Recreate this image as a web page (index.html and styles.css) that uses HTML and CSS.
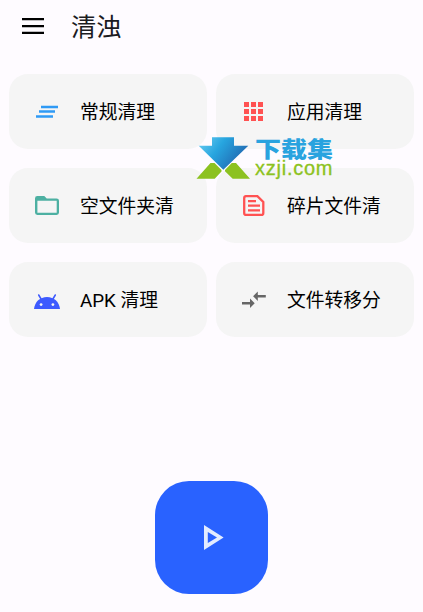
FILE: index.html
```html
<!DOCTYPE html>
<html lang="zh-CN">
<head>
<meta charset="utf-8">
<title>清浊</title>
<link rel="stylesheet" href="styles.css">
</head>
<body>
<header class="topbar">
  <svg class="menu" viewBox="0 0 22 16"><path d="M0 1.2h22M0 8.2h22M0 14.9h22" stroke="#000" stroke-width="2.3"/></svg>
  <h1 class="title">清浊</h1>
</header>
<main class="grid">
  <div class="card">
    <svg class="icon" viewBox="0 0 28 27"><path d="M8 9h17M6 13.5h16M3 18.5h17" stroke="#2f9af5" stroke-width="2.6"/></svg>
    <span>常规清理</span>
  </div>
  <div class="card">
    <svg class="icon" viewBox="0 0 28 27"><path d="M4 4h5v5H4zM11 4h5v5h-5zM18 4h5v5h-5zM4 11h5v5H4zM11 11h5v5h-5zM18 11h5v5h-5zM4 18h5v5H4zM11 18h5v5h-5zM18 18h5v5h-5z" fill="#ff5252"/></svg>
    <span>应用清理</span>
  </div>
  <div class="card">
    <svg class="icon" viewBox="0 0 28 27"><path fill-rule="evenodd" d="M4.4 4H11.3L13.7 6.4H23.6Q26 6.4 26 8.8V20.6Q26 23 23.6 23H4.4Q2 23 2 20.6V6.4Q2 4 4.4 4ZM4.4 8.8V20.7H23.7V8.8Z" fill="#4db0a2"/></svg>
    <span>空文件夹清</span>
  </div>
  <div class="card">
    <svg class="icon" viewBox="0 0 28 27"><path d="M5.2 4.1H17.4L23.3 10V20.9Q23.3 22.9 21.3 22.9H6.2Q4.2 22.9 4.2 20.9V6.1Q4.2 4.1 6.2 4.1ZM8 9.1h8M8 13.6h12M8 18.3h12" fill="none" stroke="#ff5252" stroke-width="2.3"/></svg>
    <span>碎片文件清</span>
  </div>
  <div class="card">
    <svg class="icon" viewBox="0 0 28 27"><path d="M5.7 9L8.4 13.5M22.3 9L19.6 13.5" stroke="#3d5afe" stroke-width="1.5" stroke-linecap="round"/><path d="M1 23C1.7 15.9 7 11 14 11S26.3 15.9 27 23Z" fill="#3d5afe"/><circle cx="8.1" cy="18.6" r="1.4" fill="#f5f5f5"/><circle cx="19.9" cy="18.6" r="1.4" fill="#f5f5f5"/></svg>
    <span>APK 清理</span>
  </div>
  <div class="card">
    <svg class="icon" viewBox="0 0 28 27"><path d="M2 16h8v-3.5l4.7 4.7L10 21.9v-3.5H2zM25.8 9h-8V5.5L13.1 10.2l4.7 4.7v-3.5h8z" fill="#666"/></svg>
    <span>文件转移分</span>
  </div>
</main>
<div class="run">
  <svg class="play" viewBox="0 0 20 25"><path d="M0 0L19.6 12.5L0 25ZM3.8 6.9V18.1L13 12.5Z" fill="#e3ecff" fill-rule="evenodd"/></svg>
</div>
<div class="watermark">
  <svg class="mark" viewBox="0 0 54 42">
    <defs><linearGradient id="blue" x1="0" y1="0" x2="1" y2="0.5"><stop offset="0" stop-color="#6fd0f2"/><stop offset="0.45" stop-color="#27a5df"/><stop offset="1" stop-color="#2167b0"/></linearGradient></defs>
    <path d="M16 0.3H38V8.7H52.3L27.3 32.7L2.7 8.7H16Z" fill="url(#blue)"/>
    <path d="M0.5 41.7L14.5 26H18.5L25.5 33V34.5L18.7 41.7ZM35.8 26H40L54 41.7H36.7L29 34.3V33Z" fill="#8cc220"/>
  </svg>
  <div class="brand"><span class="brand-cn">下载集</span><span class="brand-url">xzji.com</span></div>
</div>
</body>
</html>
```
FILE: styles.css
```css
* { box-sizing: border-box; }
body {
  margin: 0;
  height: 612px;
  overflow: hidden;
  position: relative;
  background: #fefbff;
  color: #000;
  font-family: Roboto, "Noto Sans CJK SC", sans-serif;
}
.topbar {
  height: 74px;
  padding: 8px 22px 0;
  display: flex;
  align-items: flex-start;
  gap: 27px;
}
.menu { width: 22px; height: 16px; margin-top: 10px; }
.title { margin: 1px 0 0; font-size: 25.3px; line-height: 37px; font-weight: 400; color: #1c1b1f; }
.grid {
  display: grid;
  grid-template-columns: 198px 198px;
  grid-auto-rows: 75.4px;
  gap: 18.6px 9px;
  padding: 0 9px;
}
.card {
  display: flex;
  align-items: center;
  gap: 19px;
  padding-left: 24px;
  border-radius: 19px;
  background: #f5f5f5;
  font-size: 18.8px;
  line-height: 28px;
  white-space: nowrap;
}
.card span { padding-top: 3px; }
.icon { width: 28px; height: 27px; flex: none; }
.run {
  width: 113px;
  height: 113px;
  margin: 143.6px 0 0 155px;
  border-radius: 34px;
  background: #2962ff;
  display: flex;
  align-items: center;
  padding-left: 49px;
}
.play { width: 20px; height: 25px; }
.watermark {
  position: absolute;
  left: 196px;
  top: 137px;
  display: flex;
  gap: 5px;
}
.mark { width: 54px; height: 42px; }
.brand { display: flex; flex-direction: column; gap: 2px; }
.brand-cn {
  font: 900 26px/21px "Noto Sans CJK SC", sans-serif;
  color: #29a3df;
  transform: scaleY(0.84);
}
.brand-url {
  font: 20px/16px "Liberation Sans", sans-serif;
  letter-spacing: 0.75px;
  color: #8cc220;
  -webkit-text-stroke: 0.3px #8cc220;
}
```
